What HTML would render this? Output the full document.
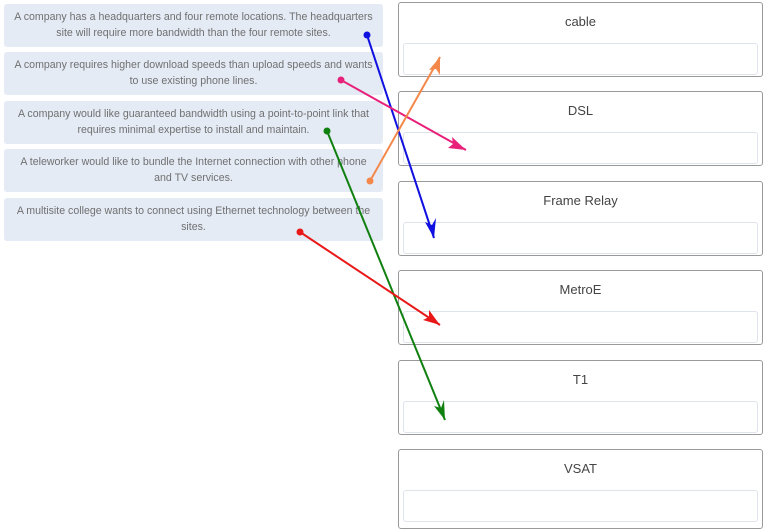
<!DOCTYPE html>
<html><head><style>
body{margin:0;width:763px;height:514px;overflow:hidden;background:#fff;font-family:"Liberation Sans",sans-serif;position:relative}
.l{position:absolute;left:4px;width:379px;height:43px;background:#e4ebf5;border-radius:3px;color:#707070;font-size:10.6px;letter-spacing:0;line-height:15.5px;text-align:center;box-sizing:border-box;padding:6px 0 0;white-space:nowrap}
.r{position:absolute;left:398px;width:365px;height:75px;border:1px solid #999;border-radius:3px;box-sizing:border-box;background:#fff}
.r .t{position:absolute;top:11px;width:100%;text-align:center;font-size:13px;color:#444}
.r .i{position:absolute;left:4px;right:4px;top:40px;height:30px;border:1px solid #dfe3ec;border-radius:3px}
svg{position:absolute;left:0;top:0}
</style></head><body>
<div class="l" style="top:4px">A company has a headquarters and four remote locations. The headquarters<br>site will require more bandwidth than the four remote sites.</div>
<div class="l" style="top:52px">A company requires higher download speeds than upload speeds and wants<br>to use existing phone lines.</div>
<div class="l" style="top:101px">A company would like guaranteed bandwidth using a point-to-point link that<br>requires minimal expertise to install and maintain.</div>
<div class="l" style="top:149px">A teleworker would like to bundle the Internet connection with other phone<br>and TV services.</div>
<div class="l" style="top:198px">A multisite college wants to connect using Ethernet technology between the<br>sites.</div>
<div class="r" style="top:2px"><div class="t">cable</div><div class="i"></div></div>
<div class="r" style="top:91px"><div class="t">DSL</div><div class="i"></div></div>
<div class="r" style="top:181px"><div class="t">Frame Relay</div><div class="i"></div></div>
<div class="r" style="top:270px"><div class="t">MetroE</div><div class="i"></div></div>
<div class="r" style="top:360px"><div class="t">T1</div><div class="i"></div></div>
<div class="r" style="top:449px;height:80px"><div class="t">VSAT</div><div class="i"></div></div>
<svg width="763" height="514">
<g stroke-width="2" fill="none">
<line x1="367" y1="35" x2="434" y2="238" stroke="#1010e0"/>
<line x1="341" y1="80" x2="466" y2="150" stroke="#e8207a"/>
<line x1="327" y1="131" x2="445" y2="420" stroke="#108010"/>
<line x1="370" y1="181" x2="440" y2="57" stroke="#f4884a"/>
<line x1="300" y1="232" x2="440" y2="325" stroke="#e81818"/>
</g>
<circle cx="367" cy="35" r="3.5" fill="#1010e0"/>
<circle cx="341" cy="80" r="3.5" fill="#e8207a"/>
<circle cx="327" cy="131" r="3.5" fill="#108010"/>
<circle cx="370" cy="181" r="3.5" fill="#f4884a"/>
<circle cx="300" cy="232" r="3.5" fill="#e81818"/>
<path d="M434,238 L425,222 L432,225 L436,218Z" fill="#1010e0"/>
<path d="M466,150 L448,148 L453,144 L452,137Z" fill="#e8207a"/>
<path d="M445,420 L434,406 L441,408 L444,400Z" fill="#108010"/>
<path d="M440,57 L440,75 L436,69 L429,70Z" fill="#f4884a"/>
<path d="M440,325 L423,320 L429,317 L429,310Z" fill="#e81818"/>
</svg>
</body></html>
